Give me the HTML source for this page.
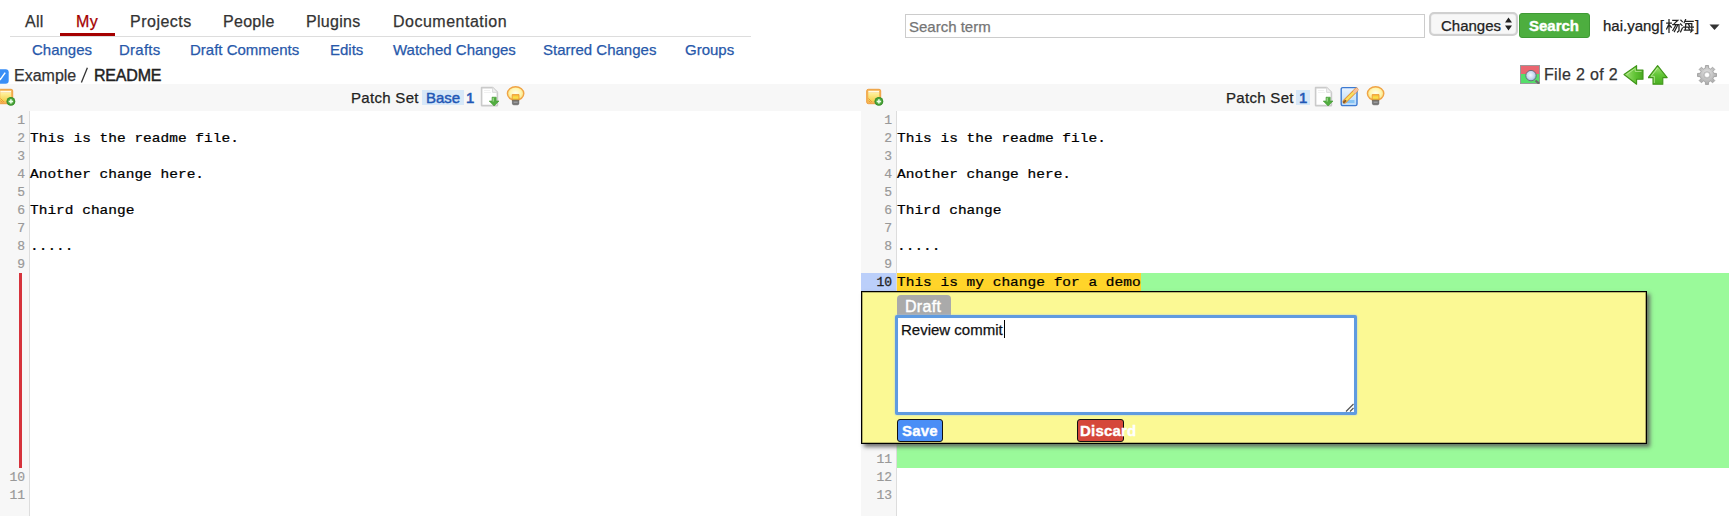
<!DOCTYPE html>
<html><head><meta charset="utf-8">
<style>
html,body{margin:0;padding:0;background:#fff;width:1729px;height:516px;overflow:hidden;position:relative;font-family:"Liberation Sans",sans-serif;}
.a{position:absolute;white-space:nowrap;-webkit-text-stroke-width:0.25px;}
.t16{font-size:16px;line-height:16px;}
.t15{font-size:15px;line-height:15px;}
.nav{color:#333;letter-spacing:0.3px;}
.sub{color:#2758aa;}
.gut{position:absolute;background:#f7f7f7;border-right:1px solid #ddd;}
.ln{position:absolute;font-family:"Liberation Mono",monospace;font-size:13px;line-height:18px;color:#999;text-align:right;-webkit-text-stroke:0.2px #999;}
.code{position:absolute;font-family:"Liberation Mono",monospace;font-size:14.5px;line-height:18px;height:18px;color:#000;white-space:pre;transform:scaleY(0.85);transform-origin:0 13px;-webkit-text-stroke:0.25px #000;}
</style></head><body>

<svg width="0" height="0" style="position:absolute"><defs>
<linearGradient id="gArr" x1="0" y1="0" x2="0" y2="1"><stop offset="0" stop-color="#a6e37a"/><stop offset="0.5" stop-color="#62c536"/><stop offset="1" stop-color="#4aae22"/></linearGradient>
<linearGradient id="gArrL" x1="0" y1="0" x2="1" y2="0"><stop offset="0" stop-color="#a6e37a"/><stop offset="0.6" stop-color="#5fc233"/><stop offset="1" stop-color="#48a820"/></linearGradient>
<radialGradient id="gGlass" cx="0.45" cy="0.45" r="0.6"><stop offset="0" stop-color="#f4f8ff"/><stop offset="0.6" stop-color="#c4d8f0"/><stop offset="1" stop-color="#8eaed6"/></radialGradient>
<radialGradient id="gBulb" cx="0.5" cy="0.45" r="0.55"><stop offset="0" stop-color="#fffef0"/><stop offset="0.6" stop-color="#fff6b0"/><stop offset="1" stop-color="#f8d870"/></radialGradient>
<linearGradient id="gFil" x1="0" y1="0" x2="0" y2="1"><stop offset="0" stop-color="#f7b23a"/><stop offset="0.5" stop-color="#f9e04a"/><stop offset="1" stop-color="#f2b43a"/></linearGradient>
<linearGradient id="gNote" x1="0" y1="0" x2="0" y2="1"><stop offset="0" stop-color="#fff2a0"/><stop offset="1" stop-color="#f2d04a"/></linearGradient>
<radialGradient id="gPlus" cx="0.5" cy="0.5" r="0.5"><stop offset="0" stop-color="#7fd06a"/><stop offset="1" stop-color="#2f8a22"/></radialGradient>
<linearGradient id="gPage" x1="0" y1="0" x2="0" y2="1"><stop offset="0" stop-color="#eaf4ff"/><stop offset="1" stop-color="#b8daf8"/></linearGradient>
<radialGradient id="gGear" cx="0.5" cy="0.4" r="0.6"><stop offset="0" stop-color="#e4e4e4"/><stop offset="1" stop-color="#a8a8a8"/></radialGradient>
</defs></svg>
<!-- top nav -->
<div class="a t16 nav" style="left:25px;top:14px;">All</div>
<div class="a t16" style="left:76px;top:14px;color:#a50000;letter-spacing:0.5px;">My</div>
<div class="a t16 nav" style="left:130px;top:14px;letter-spacing:0.5px;">Projects</div>
<div class="a t16 nav" style="left:223px;top:14px;letter-spacing:0.3px;">People</div>
<div class="a t16 nav" style="left:306px;top:14px;letter-spacing:0.3px;">Plugins</div>
<div class="a t16 nav" style="left:393px;top:14px;letter-spacing:0.5px;">Documentation</div>
<div class="a" style="left:60px;top:33px;width:55px;height:3px;background:#a50000;"></div>
<div class="a" style="left:10px;top:36px;width:741px;height:1px;background:#ddd;"></div>

<!-- sub nav -->
<div class="a t15 sub" style="left:32px;top:42px;">Changes</div>
<div class="a t15 sub" style="left:119px;top:42px;letter-spacing:0.25px;">Drafts</div>
<div class="a t15 sub" style="left:190px;top:42px;">Draft Comments</div>
<div class="a t15 sub" style="left:330px;top:42px;">Edits</div>
<div class="a t15 sub" style="left:393px;top:42px;">Watched Changes</div>
<div class="a t15 sub" style="left:543px;top:42px;">Starred Changes</div>
<div class="a t15 sub" style="left:685px;top:42px;">Groups</div>

<!-- breadcrumb -->
<svg class="a" style="left:-6px;top:69px;" width="15" height="15" viewBox="0 0 15 15"><rect x="0.3" y="0.3" width="14.4" height="14.4" rx="3" fill="#3a8ef6"/><path d="M4.2 7.8 L6.4 10.4 L11.2 3.6" stroke="#fff" stroke-width="1.5" fill="none"/></svg>
<div class="a t16" style="left:14px;top:68px;color:#333;">Example</div>
<svg class="a" style="left:80px;top:67px;" width="9" height="17" viewBox="0 0 9 17"><path d="M1.4 15.6 L7.4 0.8" stroke="#333" stroke-width="1.3"/></svg>
<div class="a t16" style="left:94px;top:68px;color:#222;letter-spacing:-0.2px;-webkit-text-stroke-width:0.45px;">README</div>

<!-- search -->
<div class="a" style="left:905px;top:14px;width:518px;height:22px;border:1px solid #ccc;background:#fff;"></div>
<div class="a t15" style="left:909px;top:19px;color:#757575;">Search term</div>
<div class="a" style="left:1429px;top:12px;width:85px;height:20px;border:2px solid #d0d0d0;border-radius:5px;background:#f7f7f7;box-shadow:inset 0 0 1px #bbb;"></div>
<div class="a t15" style="left:1441px;top:18px;color:#222;">Changes</div>
<svg class="a" style="left:1504px;top:17px;" width="9" height="14" viewBox="0 0 9 14"><path d="M4.5 0.5 L8 5.5 L1 5.5Z M4.5 13.5 L8 8.5 L1 8.5Z" fill="#222"/></svg>
<div class="a" style="left:1519px;top:13px;width:69px;height:23px;border:1px solid #3f9a35;border-radius:3px;background:#4dae3f;"></div>
<div class="a t15" style="left:1529px;top:18px;color:#fff;font-weight:bold;-webkit-text-stroke-width:0.4px;">Search</div>
<div class="a t15" style="left:1603px;top:18px;color:#222;">hai.yang[<svg style="vertical-align:-2px;margin:0 1px 0 2px" width="28" height="14" viewBox="0 0 28 14"><g fill="none" stroke="#222" stroke-width="1.25" stroke-linecap="square"><path d="M0.7 4 H5.3 M3 0.7 V13.5 M3 5 L0.6 10 M3.3 6 L5.3 8.3"/><path d="M6.8 1.3 H11.8 L8.3 4.6 M6.8 5.5 H13 V11.8 L11.6 13 M9.6 6.5 L6.8 11.5 M11.4 6.8 L8.4 12.6"/><path transform="translate(14 0)" d="M0.9 1.2 L2.3 2.6 M0.6 5 L2 6.4 M0.6 12.8 L2.4 9 M5.6 0.6 L4.2 3.6 M5 2.4 H13.2 M5.8 4.6 H11.8 V12.2 L10.8 13 M5.8 4.6 L5.3 11 M3.6 8 H13.4 M4.4 11 H13 M8.6 5.6 L9.4 6.8 M8.6 9 L9.4 10.2"/></g></svg>]</div>
<svg class="a" style="left:1709px;top:24px;" width="11" height="7" viewBox="0 0 11 7"><path d="M0.5 0.5 L10.5 0.5 L5.5 6Z" fill="#333"/></svg>

<!-- header bar -->
<div class="a" style="left:0;top:84px;width:1729px;height:27px;background:#f7f7f7;"></div>
<!-- file nav -->
<svg class="a" style="left:1520px;top:65px;" width="20" height="19" viewBox="0 0 20 19"><rect x="0.5" y="0.5" width="19" height="9" fill="#ea6670"/><rect x="0.5" y="9" width="19" height="9.5" fill="#55de6a"/><rect x="0.5" y="0.5" width="19" height="18" fill="none" stroke="#9a9a9a" stroke-width="1"/><path d="M15.5 15.5 L19 18.6" stroke="#6a6a6a" stroke-width="2.2"/><circle cx="11" cy="10.6" r="5.2" fill="url(#gGlass)" stroke="#667" stroke-width="0.9"/></svg>
<div class="a t16" style="left:1544px;top:67px;color:#333;letter-spacing:0.35px;">File 2 of 2</div>
<svg class="a" style="left:1623px;top:65px;" width="21" height="20" viewBox="0 0 21 20"><path d="M1 9.5 L13.6 0.6 V5 H20 V14.2 H13.6 V19.2 Z" fill="url(#gArrL)" stroke="#3f9418" stroke-width="1.1" stroke-linejoin="round"/><path d="M3.6 9.5 L12.2 3.4 V6.4 H18.6" fill="none" stroke="#c8f0a8" stroke-width="0.9" opacity="0.8"/></svg>
<svg class="a" style="left:1648px;top:65px;" width="20" height="20" viewBox="0 0 20 20"><path d="M9.6 0.6 L19.2 12.6 H14.8 V19.2 H5 V12.6 H0.2 Z" fill="url(#gArr)" stroke="#3f9418" stroke-width="1.1" stroke-linejoin="round"/><path d="M9.6 3 L3.2 11.3 H6.3 V18" fill="none" stroke="#c8f0a8" stroke-width="0.9" opacity="0.8"/></svg>
<svg class="a" style="left:1697px;top:65px;" width="20" height="20" viewBox="0 0 20 20"><path d="M16.80 8.34 L19.48 8.47 L19.48 11.53 L16.80 11.66 L16.47 12.68 L15.98 13.63 L17.78 15.62 L15.62 17.78 L13.63 15.98 L12.68 16.47 L11.66 16.80 L11.53 19.48 L8.47 19.48 L8.34 16.80 L7.32 16.47 L6.37 15.98 L4.38 17.78 L2.22 15.62 L4.02 13.63 L3.53 12.68 L3.20 11.66 L0.52 11.53 L0.52 8.47 L3.20 8.34 L3.53 7.32 L4.02 6.37 L2.22 4.38 L4.38 2.22 L6.37 4.02 L7.32 3.53 L8.34 3.20 L8.47 0.52 L11.53 0.52 L11.66 3.20 L12.68 3.53 L13.63 4.02 L15.62 2.22 L17.78 4.38 L15.98 6.37 L16.47 7.32Z" fill="url(#gGear)" stroke="#a0a0a0" stroke-width="0.9" stroke-linejoin="round"/><circle cx="10" cy="10" r="3.3" fill="none" stroke="#b8b8b8" stroke-width="1"/><circle cx="10" cy="10" r="2.1" fill="#fff"/></svg>


<!-- add comment icons -->
<svg class="a" style="left:-2px;top:88px;" width="19" height="19" viewBox="0 0 19 19"><rect x="0.7" y="1.3" width="14" height="14.4" rx="1.6" fill="#f5b454" stroke="#eea040" stroke-width="1"/><rect x="2.3" y="2.8" width="10.8" height="1.8" fill="#fffbe8"/><rect x="2.3" y="4.6" width="10.8" height="8.8" fill="url(#gNote)"/><path d="M2.5 10.5 L6 14 M2.5 12.5 L4.5 14.5" stroke="#e9963a" stroke-width="1"/><circle cx="12.9" cy="13.4" r="4.4" fill="url(#gPlus)"/><path d="M12.9 11.2 V15.6 M10.7 13.4 H15.1" stroke="#eaffea" stroke-width="1.5"/></svg>
<svg class="a" style="left:866px;top:88px;" width="19" height="19" viewBox="0 0 19 19"><rect x="0.7" y="1.3" width="14" height="14.4" rx="1.6" fill="#f5b454" stroke="#eea040" stroke-width="1"/><rect x="2.3" y="2.8" width="10.8" height="1.8" fill="#fffbe8"/><rect x="2.3" y="4.6" width="10.8" height="8.8" fill="url(#gNote)"/><path d="M2.5 10.5 L6 14 M2.5 12.5 L4.5 14.5" stroke="#e9963a" stroke-width="1"/><circle cx="12.9" cy="13.4" r="4.4" fill="url(#gPlus)"/><path d="M12.9 11.2 V15.6 M10.7 13.4 H15.1" stroke="#eaffea" stroke-width="1.5"/></svg>

<!-- left header -->
<div class="a t15" style="left:351px;top:90px;color:#222;letter-spacing:0.3px;">Patch Set</div>
<div class="a" style="left:422px;top:90px;width:42px;height:15px;background:#d7e8f8;"></div>
<div class="a t15" style="left:426px;top:90px;color:#1f57b5;-webkit-text-stroke-width:0.45px;">Base</div>
<div class="a t15" style="left:466px;top:90px;color:#1f57b5;-webkit-text-stroke-width:0.6px;">1</div>
<svg class="a" style="left:480px;top:86px;" width="20" height="21" viewBox="0 0 20 21"><path d="M1.6 1.6 H12.6 L17.4 6.4 V19.6 H1.6Z" fill="#fff" stroke="#cacaca" stroke-width="1.6" stroke-linejoin="round"/><path d="M12.6 1.6 V6.4 H17.4" fill="#f0f0f0" stroke="#dadada" stroke-width="1"/><path d="M4 4.5 H10 M4 6.5 H11" stroke="#eee" stroke-width="0.8"/><path d="M12 11.2 H16.2 V15 H19 L14.1 20 L9.2 15 H12Z" fill="#52ad40" stroke="#3f9a2f" stroke-width="0.6"/><path d="M13.2 12 V15.5" stroke="#a6dc96" stroke-width="1.2"/></svg>
<svg class="a" style="left:506px;top:86px;" width="19" height="20" viewBox="0 0 19 20"><ellipse cx="9.6" cy="7.6" rx="8.2" ry="6.8" fill="url(#gBulb)" stroke="#f0a446" stroke-width="1.4"/><path d="M6.2 8.6 H13 V14.2 H6.2Z" fill="url(#gFil)" stroke="#ef9a32" stroke-width="0.9"/><path d="M6.4 14.2 H12.8 V17.4 Q12.8 18.8 11.4 18.8 H7.8 Q6.4 18.8 6.4 17.4Z" fill="#777" stroke="#555" stroke-width="0.6"/><path d="M7.6 16.2 H11.6" stroke="#bbb" stroke-width="0.8"/></svg>

<!-- right header -->
<div class="a t15" style="left:1226px;top:90px;color:#222;letter-spacing:0.3px;">Patch Set</div>
<div class="a" style="left:1296px;top:90px;width:14px;height:15px;background:#d7e8f8;"></div>
<div class="a t15" style="left:1299px;top:90px;color:#1f57b5;-webkit-text-stroke-width:0.6px;">1</div>
<svg class="a" style="left:1314px;top:86px;" width="20" height="21" viewBox="0 0 20 21"><path d="M1.6 1.6 H12.6 L17.4 6.4 V19.6 H1.6Z" fill="#fff" stroke="#cacaca" stroke-width="1.6" stroke-linejoin="round"/><path d="M12.6 1.6 V6.4 H17.4" fill="#f0f0f0" stroke="#dadada" stroke-width="1"/><path d="M4 4.5 H10 M4 6.5 H11" stroke="#eee" stroke-width="0.8"/><path d="M12 11.2 H16.2 V15 H19 L14.1 20 L9.2 15 H12Z" fill="#52ad40" stroke="#3f9a2f" stroke-width="0.6"/><path d="M13.2 12 V15.5" stroke="#a6dc96" stroke-width="1.2"/></svg>
<svg class="a" style="left:1340px;top:86px;" width="20" height="21" viewBox="0 0 20 21"><rect x="1.2" y="1.6" width="15.8" height="18" rx="1.6" fill="url(#gPage)" stroke="#3c7ad2" stroke-width="1.4"/><rect x="3.5" y="14" width="11" height="3" fill="#86c4f4"/><path d="M4.6 15.6 L16.4 3.8" stroke="#e3923a" stroke-width="4.2" stroke-linecap="round"/><path d="M4.6 15.6 L16.4 3.8" stroke="#f8e060" stroke-width="2.4"/><path d="M14.6 5.6 L16.6 3.6" stroke="#f6c0a0" stroke-width="3" stroke-linecap="round"/><path d="M3.8 16.4 L5.4 14.8" stroke="#8a5a2a" stroke-width="2" stroke-linecap="round"/></svg>
<svg class="a" style="left:1366px;top:86px;" width="19" height="20" viewBox="0 0 19 20"><ellipse cx="9.6" cy="7.6" rx="8.2" ry="6.8" fill="url(#gBulb)" stroke="#f0a446" stroke-width="1.4"/><path d="M6.2 8.6 H13 V14.2 H6.2Z" fill="url(#gFil)" stroke="#ef9a32" stroke-width="0.9"/><path d="M6.4 14.2 H12.8 V17.4 Q12.8 18.8 11.4 18.8 H7.8 Q6.4 18.8 6.4 17.4Z" fill="#777" stroke="#555" stroke-width="0.6"/><path d="M7.6 16.2 H11.6" stroke="#bbb" stroke-width="0.8"/></svg>

<!-- gutters -->
<div class="gut" style="left:0;top:111px;width:29px;height:405px;"></div>
<div class="gut" style="left:861px;top:111px;width:35px;height:405px;"></div>

<!-- left line numbers -->
<div class="ln" style="left:0;top:112px;width:25px;">1<br>2<br>3<br>4<br>5<br>6<br>7<br>8<br>9</div>
<div class="a" style="left:19px;top:273px;width:3px;height:195px;background:#d6333c;"></div>
<div class="ln" style="left:0;top:469px;width:25px;">10<br>11</div>
<div class="code" style="left:30px;top:129px;">This is the readme file.</div>
<div class="code" style="left:30px;top:165px;">Another change here.</div>
<div class="code" style="left:30px;top:201px;">Third change</div>
<div class="code" style="left:30px;top:237px;">.....</div>

<!-- right pane -->
<div class="a" style="left:897px;top:273px;width:832px;height:195px;background:#9afa9a;"></div>
<div class="a" style="left:861px;top:273px;width:35px;height:18px;background:#bbcffa;"></div>
<div class="ln" style="left:861px;top:112px;width:31px;">1<br>2<br>3<br>4<br>5<br>6<br>7<br>8<br>9</div>
<div class="ln" style="left:861px;top:274px;width:31px;color:#222;-webkit-text-stroke:0.3px #222;">10</div>
<div class="ln" style="left:861px;top:451px;width:31px;">11<br>12<br>13</div>
<div class="code" style="left:897px;top:129px;">This is the readme file.</div>
<div class="code" style="left:897px;top:165px;">Another change here.</div>
<div class="code" style="left:897px;top:201px;">Third change</div>
<div class="code" style="left:897px;top:237px;">.....</div>
<div class="a" style="left:897px;top:273px;width:244px;height:18px;background:#ffd42a;"></div>
<div class="code" style="left:897px;top:273px;">This is my change for a demo</div>

<!-- comment box -->
<div class="a" style="left:861px;top:291px;width:784px;height:151px;background:#fbf994;border:1px solid #000;box-shadow:inset 0 0 0 0.6px rgba(0,0,0,0.5), 3px 3px 4px rgba(90,90,90,0.85);"></div>
<div class="a" style="left:897px;top:295px;width:54px;height:21px;background:#aaa;border-radius:4px 4px 0 0;"></div>
<div class="a t16" style="left:905px;top:299px;color:#fff;letter-spacing:0.3px;-webkit-text-stroke-width:0.4px;">Draft</div>
<div class="a" style="left:895px;top:315px;width:456px;height:94px;background:#fff;border:3px solid #5f9be0;border-radius:2px;box-shadow:0 0 2px #9cc6f2, inset 0 0 1px #cfe3fa;"></div>
<div class="a t15" style="left:901px;top:322px;color:#111;">Review commit</div>
<div class="a" style="left:1004px;top:320px;width:1px;height:18px;background:#000;"></div>
<svg class="a" style="left:1345px;top:403px;" width="9" height="9" viewBox="0 0 9 9"><path d="M1 8.5 L8.5 1 M5 8.5 L8.5 5" stroke="#555" stroke-width="1.2"/></svg>
<div class="a" style="left:897px;top:419px;width:44px;height:21px;background:#4a8ef6;border:1px solid #111;border-radius:3px;"></div>
<div class="a t15" style="left:902px;top:423px;color:#fff;font-weight:bold;letter-spacing:0.2px;-webkit-text-stroke-width:0.35px;">Save</div>
<div class="a" style="left:1077px;top:419px;width:45px;height:21px;background:#d5473a;border:1px solid #111;border-radius:3px;"></div>
<div class="a t15" style="left:1080px;top:423px;color:#fff;font-weight:bold;letter-spacing:0.2px;-webkit-text-stroke-width:0.35px;">Discard</div>

</body></html>
